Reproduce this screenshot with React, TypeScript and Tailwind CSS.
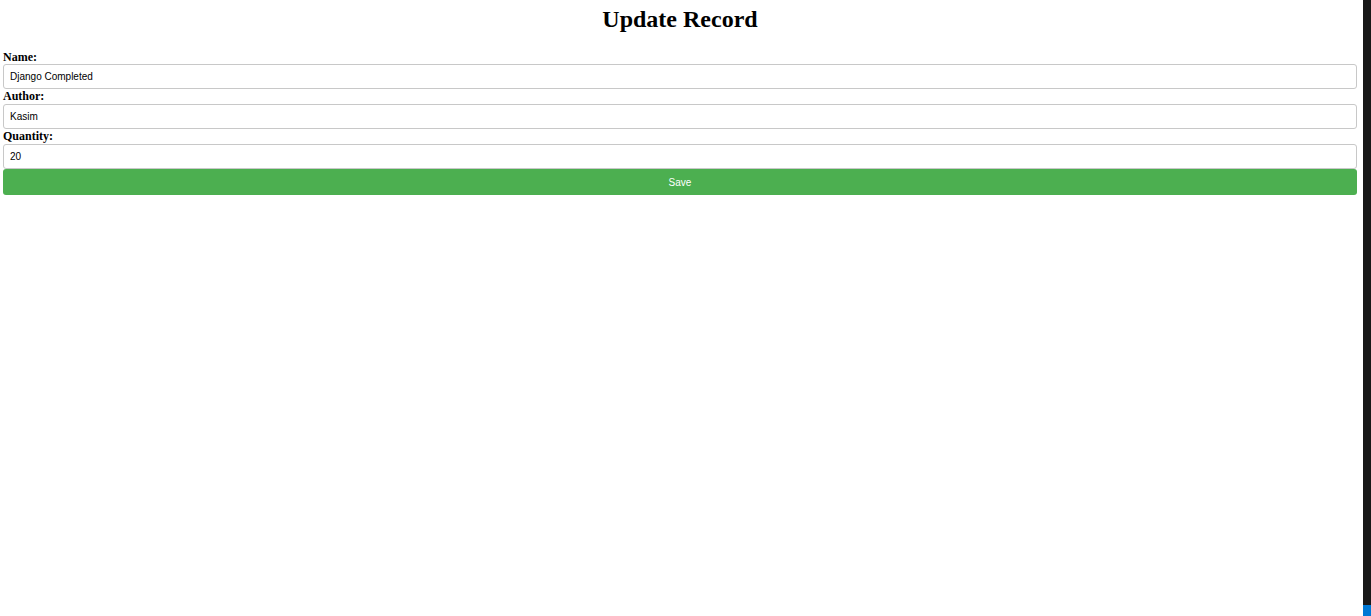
export default function App() {
  return (
    <div className="flex h-[616px] w-full bg-white">
      {/* PAGE */}
      <div className="flex-1 pl-[3px] pr-[6px]">
        <h1 className="mt-[5px] mb-[17px] text-center text-[24px] leading-[28px] font-bold text-black [font-family:'Liberation_Serif',serif]">
          Update Record
        </h1>

        <form className="flex flex-col">
          <label className="block text-[12px] leading-[14px] font-bold text-black [font-family:'Liberation_Serif',serif]">
            Name:
          </label>
          <input
            defaultValue="Django Completed"
            className="box-border h-[25px] w-full rounded-[3px] border border-[#c8c8c8] px-[6px] text-[10px] text-black outline-none [font-family:'Liberation_Sans',Arial,sans-serif]"
          />

          <label className="block text-[12px] leading-[15px] font-bold text-black [font-family:'Liberation_Serif',serif]">
            Author:
          </label>
          <input
            defaultValue="Kasim"
            className="box-border h-[25px] w-full rounded-[3px] border border-[#c8c8c8] px-[6px] text-[10px] text-black outline-none [font-family:'Liberation_Sans',Arial,sans-serif]"
          />

          <label className="block text-[12px] leading-[15px] font-bold text-black [font-family:'Liberation_Serif',serif]">
            Quantity:
          </label>
          <input
            defaultValue="20"
            className="box-border h-[25px] w-full rounded-[3px] border border-[#c8c8c8] px-[6px] text-[10px] text-black outline-none [font-family:'Liberation_Sans',Arial,sans-serif]"
          />

          <button
            type="button"
            className="h-[26px] w-full rounded-[3px] bg-[#4caf50] pt-[1px] text-[10px] text-white [font-family:'Liberation_Sans',Arial,sans-serif]"
          >
            Save
          </button>
        </form>
      </div>

      {/* SIDE STRIP */}
      <div className="flex w-[8px] flex-col bg-[#181818]">
        <div className="flex-1" />
        <div className="h-[11px] bg-[#0078d4]" />
      </div>
    </div>
  );
}
